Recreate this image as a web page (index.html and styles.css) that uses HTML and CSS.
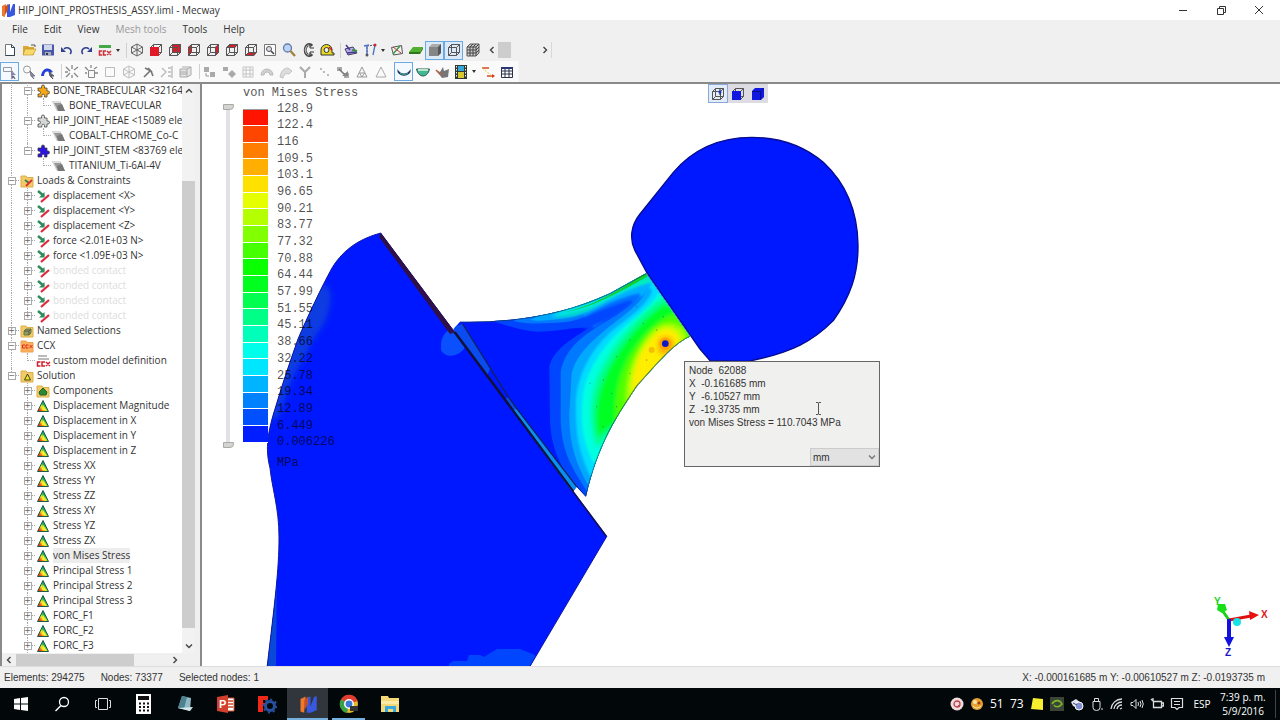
FILE: index.html
```html
<!DOCTYPE html>
<html lang="en">
<head>
<meta charset="utf-8">
<title>HIP_JOINT_PROSTHESIS_ASSY.liml - Mecway</title>
<link rel="stylesheet" href="styles.css">
</head>
<body>
<svg class="defs" aria-hidden="true">
  <defs>
    <g id="wire" fill="none" stroke="#555"><path d="M2.500 5.500h8v8h-8zM5.500 2.500h8v8M5.500 2.500v8h8M2.500 5.500l3-3M10.500 5.500l3-3M10.500 13.500l3-3M2.500 13.500l3-3"/></g>
    <linearGradient id="rain" x1="1" y1="0" x2="0" y2="1"><stop offset=".2" stop-color="#1560d8"/><stop offset=".4" stop-color="#18b050"/><stop offset=".6" stop-color="#f4ee20"/><stop offset=".85" stop-color="#f03018"/></linearGradient>
  </defs>
  <symbol id="i-result" viewBox="0 0 16 16"><path d="M8 2.500L13.500 13.500H2.500z" fill="url(#rain)" stroke="#1d5a48"/><path d="M8 7l3 5H7z" fill="#f8f030"/></symbol>
  <symbol id="i-load" viewBox="0 0 16 16"><path d="M3 3l6 5" stroke="#2f8a5c" stroke-width="2.500"/><path d="M9.500 4v5.500H4z" fill="#2f8a5c"/><path d="M6 14l8-7" stroke="#e0283c" stroke-width="2.200"/></symbol>
  <symbol id="i-mat" viewBox="0 0 16 16"><path d="M1 3h8l5 10H6z" fill="#999"/><path d="M1 3h8l1 2H3l4 8H6z" fill="#ddd"/><path d="M6 8l5-2 3 7H7z" fill="#777"/></symbol>
  <symbol id="i-puzzle" viewBox="0 0 16 16"><path d="M3 5h3.500V3.500a1.500 1.500 0 0 1 3 0V5H12v3h1a1.500 1.500 0 0 1 0 3h-1v3H9.500v-1.500a1.300 1.300 0 0 0-2.600 0V14H3v-3h1a1.500 1.500 0 0 0 0-3H3z" stroke="#333" stroke-opacity=".7"/></symbol>
  <symbol id="i-folder" viewBox="0 0 16 16"><path d="M2 3h5l1 1.500h6V14H2z" fill="#f2cb68" stroke="#dcae48"/></symbol>
  <symbol id="i-folder-load" viewBox="0 0 16 16"><use href="#i-folder"/><path d="M6 7l4 3" stroke="#38844c" stroke-width="2"/><path d="M7 13l6-6" stroke="#e03030" stroke-width="2"/></symbol>
  <symbol id="i-folder-sel" viewBox="0 0 16 16"><use href="#i-folder"/><path d="M5 8l2-2h5v4l-2 2H5z" fill="#8d9c58" stroke="#6d7840"/><path d="M5 8h5v4M10 8l2-2" stroke="#555" fill="none"/></symbol>
  <symbol id="i-folder-ccx" viewBox="0 0 16 16"><path d="M2 3h5l1 1.500h6V14H2z" fill="#fbae5c" stroke="#eda050"/><path d="M6 7H3.500v3H6M9.500 7H7v3h2.500M10.500 7l3 3M13.500 7l-3 3" stroke="#e02a18" fill="none"/></symbol>
  <symbol id="i-folder-sol" viewBox="0 0 16 16"><use href="#i-folder"/><path d="M8.500 6l3 6h-6z" fill="#f8e820" stroke="#404020"/></symbol>
  <symbol id="i-folder-comp" viewBox="0 0 16 16"><use href="#i-folder"/><path d="M8 5l4 4-1 3H5L4 9z" fill="#2a8a34" stroke="#206028"/></symbol>
  <symbol id="i-ccx" viewBox="0 0 16 16"><path d="M3 3h9M3 6h11" stroke="#777"/><path d="M5.500 9H2.500v4h3M10 9H7v4h3M11 9l4 4M15 9l-4 4" stroke="#d41c2c" stroke-width="1.500" fill="none"/></symbol>
  <symbol id="i-new" viewBox="0 0 16 16"><path d="M3.500 2.500h6l3 3v8h-9z" fill="#fff" stroke="#777"/><path d="M9.500 2.500v3h3v8h-9" fill="none" stroke="#345"/></symbol>
  <symbol id="i-open" viewBox="0 0 16 16"><path d="M2 4h5l1 1h5v8H2z" fill="#d8a830"/><path d="M4 7h11l-3 6H2z" fill="#f8d868" stroke="#b88a20" stroke-width=".6"/><path d="M10 3h4v2" stroke="#555" fill="none"/></symbol>
  <symbol id="i-save" viewBox="0 0 16 16"><path d="M2 2.500h12v11H2z" fill="#4858a8"/><path d="M4 3h8v5H4z" fill="#cfd6ee"/><path d="M5 10h6v4H5z" fill="#aab"/><path d="M6 11h2v2H6z" fill="#334"/></symbol>
  <symbol id="i-undo" viewBox="0 0 16 16"><path d="M5 7a4 3.500 0 1 1 6 5" fill="none" stroke="#304090" stroke-width="1.600"/><path d="M2 5v5h5z" fill="#304090"/></symbol>
  <symbol id="i-ccxrun" viewBox="0 0 16 16"><path d="M2 3h12v3H2z" fill="#45a848"/><path d="M5 9H2.500v4H5M9 9H6.500v4H9M10 9l4 4M14 9l-4 4" fill="none" stroke="#cc3038" stroke-width="1.600"/></symbol>
  <symbol id="i-iso" viewBox="0 0 16 16"><path d="M8 2l5.500 3v6L8 14l-5.500-3V5zM2.500 5L8 8l5.500-3M8 8v6M2.500 11L8 8l5.500 3M8 2v6" fill="none" stroke="#666"/></symbol>
  <symbol id="i-front" viewBox="0 0 16 16"><use href="#wire"/><path d="M2 5h9v9H2z" fill="#e01828"/></symbol>
  <symbol id="i-back" viewBox="0 0 16 16"><path d="M5 2h9v9H5z" fill="#d81c28"/><use href="#wire"/></symbol>
  <symbol id="i-left" viewBox="0 0 16 16"><path d="M2 5l4-3v8l-4 4z" fill="#d81c28"/><use href="#wire"/></symbol>
  <symbol id="i-right" viewBox="0 0 16 16"><path d="M10 5l4-3v8l-4 4z" fill="#d81c28"/><use href="#wire"/></symbol>
  <symbol id="i-top" viewBox="0 0 16 16"><path d="M2 6l4-4h8l-3 4z" fill="#d81c28"/><use href="#wire"/></symbol>
  <symbol id="i-bottom" viewBox="0 0 16 16"><path d="M2 14l4-4h8l-3 4z" fill="#d81c28"/><use href="#wire"/></symbol>
  <symbol id="i-fit" viewBox="0 0 16 16"><path d="M2.500 2.500h11v11h-11z" fill="#fafafa" stroke="#777"/><circle cx="7" cy="7" r="2.500" fill="#dde" stroke="#555"/><path d="M9 9l3 3" stroke="#444" stroke-width="1.600"/></symbol>
  <symbol id="i-zoom" viewBox="0 0 16 16"><circle cx="6.500" cy="6" r="4" fill="#b8d4f4" stroke="#6878a8" stroke-width="1.300"/><path d="M9.500 9l4.500 5" stroke="#a08038" stroke-width="2.200"/></symbol>
  <symbol id="i-rotate" viewBox="0 0 16 16"><path d="M12 4a4 5.500 0 1 0 0 8" fill="none" stroke="#444" stroke-width="3"/><path d="M11.500 4.500a3.600 5 0 1 0 0 7" fill="none" stroke="#ccc"/><path d="M10 2v4h4M10 14v-4h4" stroke="#333" fill="none"/></symbol>
  <symbol id="i-tape" viewBox="0 0 16 16"><path d="M2 13V8a5.500 5.500 0 0 1 11 0v3h2v2z" fill="#e8dc20" stroke="#333"/><circle cx="7.500" cy="8" r="2.500" fill="#eee" stroke="#333"/><path d="M10 5l3 3" stroke="#d02020" stroke-width="1.500"/></symbol>
  <symbol id="i-plane" viewBox="0 0 16 16"><path d="M2 7l8-2 4 6-9 2z" fill="#b8aee8" stroke="#40386a"/><path d="M3 3l4 5M4 11l9-1" stroke="#443c88" stroke-width="1.500"/><path d="M9 8l5 1" stroke="#389048" stroke-width="2"/></symbol>
  <symbol id="i-axes" viewBox="0 0 16 16"><path d="M5 13V4l8-1" fill="none" stroke="#556" stroke-dasharray="2 1"/><path d="M2 4l5-1M5 14V4M13 3l-2 10" stroke="#4a70c8" stroke-width="1.300"/><circle cx="5" cy="13" r="1.500" fill="#556"/><circle cx="13" cy="3" r="1.500" fill="#c03030"/></symbol>
  <symbol id="i-elem" viewBox="0 0 16 16"><path d="M2.500 5.500l10-2 1 8-9 1.500z" fill="#f4f4f4" stroke="#555"/><path d="M4 12l7-8" stroke="#3a9a48" stroke-width="1.500"/><path d="M4 5l8 6" stroke="#c03838"/></symbol>
  <symbol id="i-slab" viewBox="0 0 16 16"><path d="M5 5h10l-3 5H1z" fill="#52b030"/><path d="M1 10h11l3-5v2l-3 5H1z" fill="#2e7818"/></symbol>
  <symbol id="i-solid" viewBox="0 0 16 16"><path d="M2 5l3-3h9v9l-3 3H2z" fill="#aaa"/><path d="M2 5h9v9H2z" fill="#858585"/><path d="M11 5l3-3v9l-3 3z" fill="#555"/></symbol>
  <symbol id="i-wire" viewBox="0 0 16 16"><use href="#wire"/></symbol>
  <symbol id="i-mesh" viewBox="0 0 16 16"><path d="M2 5l3-3h9v9l-3 3H2z" fill="#ccc" stroke="#555"/><path d="M2 5h9v9M11 5l3-3M2 8h9l3-3M2 11h9l3-3M5 5v9M8 5v9M5 5l3-3M8 5l3-3" stroke="#444" fill="none"/></symbol>
  <symbol id="i-selrect" viewBox="0 0 16 16"><path d="M1.500 3.500h8v4h-8z" fill="none" stroke="#999"/><path d="M10 7v7l1.500-1.500L13 15" fill="none" stroke="#667" stroke-width="1.300"/><path d="M9 6l5 5h-5z" fill="#8a8aa8"/></symbol>
  <symbol id="i-selcirc" viewBox="0 0 16 16"><circle cx="6" cy="5.500" r="3.500" fill="none" stroke="#999"/><path d="M9 7l5 5h-3l2 3-3-3z" fill="#8a8aa8" stroke="#778"/></symbol>
  <symbol id="i-selface" viewBox="0 0 16 16"><path d="M1 12C2 4 9 2 13 8l-3 1C7 6 4 8 4 12z" fill="#2440d8"/><path d="M9 8l5 4h-3l2 3-3-3z" fill="#667" stroke="#556"/></symbol>
  <symbol id="i-star" viewBox="0 0 16 16"><path d="M2 3l4 4M14 3l-4 3M2 13l4-4M14 13l-4-4M8 1v4M1 8h3M8 11v3" stroke="#888" stroke-width="1.300"/></symbol>
  <symbol id="i-starsq" viewBox="0 0 16 16"><path d="M5.500 6.500h6v7h-6z" fill="none" stroke="#888"/><path d="M2 3l3 3M14 3l-3 2M8 1v3M2 9h2M12 9h3" stroke="#888" stroke-width="1.300"/></symbol>
  <symbol id="i-sq" viewBox="0 0 16 16"><path d="M3.500 3.500h9v9h-9z" fill="none" stroke="#bbb"/></symbol>
  <symbol id="i-cut" viewBox="0 0 16 16"><path d="M4 13l6-6M5 4l6 3 2 5M8 4l4 4" stroke="#777" stroke-width="1.700" fill="none"/></symbol>
  <symbol id="i-mirror" viewBox="0 0 16 16"><path d="M3 4l4 4-5 5M13 2v12M9 4h3M9 8h3M9 12h3" stroke="#bbb" fill="none" stroke-width="1.400"/></symbol>
  <symbol id="i-stack" viewBox="0 0 16 16"><path d="M2 5h7v8H2zM9 5l4-2v8l-4 2M4 3h9M2 8h7M2 10h7" stroke="#aaa" fill="#e4e4e4"/></symbol>
  <symbol id="i-copy" viewBox="0 0 16 16"><path d="M2 3h5v5H2zM8 8h5v5H8z" fill="#aaa"/><path d="M4 9v3h3" stroke="#999" fill="none"/></symbol>
  <symbol id="i-diamond" viewBox="0 0 16 16"><path d="M2 3h5v4H2zM11 6l4 4-4 4-4-4z" fill="#aaa"/></symbol>
  <symbol id="i-grid" viewBox="0 0 16 16"><path d="M3 3h10v10H3zM3 6h10M3 10h10M6 3v10M10 3v10" stroke="#c4c4c4" fill="none"/></symbol>
  <symbol id="i-arc" viewBox="0 0 16 16"><path d="M2 11a6 6 0 0 1 12 0h-3a3 3 0 0 0-6 0z" fill="#d0d0d0" stroke="#bbb"/></symbol>
  <symbol id="i-bend" viewBox="0 0 16 16"><path d="M2 13c1-6 4-9 8-9l4 3-3 3c-3-1-5 0-6 4z" fill="#ddd" stroke="#c4c4c4"/></symbol>
  <symbol id="i-y" viewBox="0 0 16 16"><path d="M3 3l5 5 5-5M8 8v6" stroke="#aaa" fill="none" stroke-width="2"/></symbol>
  <symbol id="i-dots" viewBox="0 0 16 16"><path d="M4 4h2v2H4zM7 7h2v2H7zM11 10h2v2h-2z" fill="#bbb"/></symbol>
  <symbol id="i-scale" viewBox="0 0 16 16"><path d="M2 3h5v4H2zM9 9h5v5H9z" fill="#aaa"/><path d="M4 5l7 7" stroke="#777" stroke-width="1.600"/><path d="M7 12h6V7z" fill="#888"/></symbol>
  <symbol id="i-tri" viewBox="0 0 16 16"><path d="M8 3l5 10H3z" fill="none" stroke="#aaa"/></symbol>
  <symbol id="i-tri2" viewBox="0 0 16 16"><path d="M8 3l5 10H3zM5.500 9h5L8 13z" fill="none" stroke="#999"/></symbol>
  <symbol id="i-deform" viewBox="0 0 16 16"><path d="M1.500 5c3 6 10 6 13 0v3c-3 5-10 5-13 0z" fill="#203868"/><path d="M4 9c3 2 6 2 8 0" stroke="#38b890" fill="none"/></symbol>
  <symbol id="i-cont" viewBox="0 0 16 16"><path d="M1.500 5h13c-1 5-4 7-6.500 7S2.500 10 1.500 5z" fill="#40b890" stroke="#305860"/><path d="M3 6h10" stroke="#b8e8c8" stroke-width="2"/></symbol>
  <symbol id="i-beam" viewBox="0 0 16 16"><path d="M2 6l4 2 3-5 1 4 5-2-1 8-6 1z" fill="#777"/><path d="M2 6l5 5" stroke="#c06040" stroke-width="1.500"/></symbol>
  <symbol id="i-film" viewBox="0 0 16 16"><path d="M2 1h12v14H2z" fill="#303830"/><path d="M5 2h6v5H5z" fill="#36a8d8"/><path d="M5 8h6v6H5z" fill="#d8c830"/><path d="M3.500 2v12M12.500 2v12" stroke="#eee" stroke-dasharray="1.500 1.500"/></symbol>
  <symbol id="i-range" viewBox="0 0 16 16"><path d="M2 4h7M7 12h7" stroke="#d84828" stroke-width="1.400"/><path d="M2 4l10 8" stroke="#e8c828" stroke-dasharray="2 1.500"/><path d="M12 10l3 2-3 2z" fill="#d83828"/></symbol>
  <symbol id="i-table" viewBox="0 0 16 16"><path d="M2.500 3.500h11v10h-11zM2.500 7h11M2.500 10h11M6 4v9M10 4v9" fill="#fff" stroke="#28304c"/><path d="M2 3h12v2H2z" fill="#283870"/></symbol>
  <symbol id="i-logo" viewBox="0 0 16 16"><path d="M2 14V4l4-2v5l3-5v9H7V8l-2 3v4z" fill="#f07828"/><path d="M7 3l3-1v8l3-8h2v11l-5 2H7z" fill="#3858e0"/><path d="M5 5l3-3v6l-3 5z" fill="#c05030"/></symbol>
</svg>

<header>
  <div class="titlebar">
    <svg class="ic"><use href="#i-logo"/></svg>
    <h1>HIP_JOINT_PROSTHESIS_ASSY.liml - Mecway</h1>
    <div class="winbtns">
      <button aria-label="Minimize"><svg viewBox="0 0 12 12"><path d="M2 6.500h8"/></svg></button>
      <button aria-label="Restore"><svg viewBox="0 0 12 12"><path d="M2.500 4.500h6v6h-6zM4.500 4V2.500h6v6H9"/></svg></button>
      <button aria-label="Close"><svg viewBox="0 0 12 12"><path d="M2 2l8 8M10 2l-8 8"/></svg></button>
    </div>
  </div>
  <nav class="menubar">
    <button>File</button><button>Edit</button><button>View</button><button disabled>Mesh tools</button><button>Tools</button><button>Help</button>
  </nav>
  <div class="toolbar">
    <button aria-label="New"><svg class="ic"><use href="#i-new"/></svg></button>
    <button aria-label="Open"><svg class="ic"><use href="#i-open"/></svg></button>
    <button aria-label="Save"><svg class="ic"><use href="#i-save"/></svg></button>
    <button aria-label="Undo"><svg class="ic"><use href="#i-undo"/></svg></button>
    <button aria-label="Redo"><svg class="ic flip"><use href="#i-undo"/></svg></button>
    <button aria-label="Solve"><svg class="ic"><use href="#i-ccxrun"/></svg></button>
    <button class="drop" aria-label="Solver options"></button>
    <span class="sep"></span>
    <button aria-label="Isometric"><svg class="ic"><use href="#i-iso"/></svg></button>
    <button aria-label="Front"><svg class="ic"><use href="#i-front"/></svg></button>
    <button aria-label="Back"><svg class="ic"><use href="#i-back"/></svg></button>
    <button aria-label="Left"><svg class="ic"><use href="#i-left"/></svg></button>
    <button aria-label="Right"><svg class="ic"><use href="#i-right"/></svg></button>
    <button aria-label="Top"><svg class="ic"><use href="#i-top"/></svg></button>
    <button aria-label="Bottom"><svg class="ic"><use href="#i-bottom"/></svg></button>
    <button aria-label="Fit"><svg class="ic"><use href="#i-fit"/></svg></button>
    <button aria-label="Zoom"><svg class="ic"><use href="#i-zoom"/></svg></button>
    <button aria-label="Rotate"><svg class="ic"><use href="#i-rotate"/></svg></button>
    <button aria-label="Measure"><svg class="ic"><use href="#i-tape"/></svg></button>
    <span class="sep"></span>
    <button aria-label="Cutting plane"><svg class="ic"><use href="#i-plane"/></svg></button>
    <button aria-label="Workplane"><svg class="ic"><use href="#i-axes"/></svg></button>
    <button class="drop" aria-label="Workplane options"></button>
    <button aria-label="Element axes"><svg class="ic"><use href="#i-elem"/></svg></button>
    <button aria-label="Shell thickness"><svg class="ic"><use href="#i-slab"/></svg></button>
    <button class="on" aria-label="Element surfaces"><svg class="ic"><use href="#i-solid"/></svg></button>
    <button class="on" aria-label="Element edges"><svg class="ic"><use href="#i-wire"/></svg></button>
    <button aria-label="Mesh lines"><svg class="ic"><use href="#i-mesh"/></svg></button>
    <div class="timescroll">
      <button aria-label="Previous step"><svg viewBox="0 0 8 8"><path d="M5.500 1L2.500 4l3 3"/></svg></button>
      <span class="thumb"></span>
      <button aria-label="Next step"><svg viewBox="0 0 8 8"><path d="M2.500 1l3 3-3 3"/></svg></button>
    </div>
  </div>
  <div class="toolbar second">
    <button class="on" aria-label="Select by rectangle"><svg class="ic"><use href="#i-selrect"/></svg></button>
    <button aria-label="Select by circle"><svg class="ic"><use href="#i-selcirc"/></svg></button>
    <button aria-label="Select faces"><svg class="ic"><use href="#i-selface"/></svg></button>
    <span class="sep"></span>
    <button aria-label="New node"><svg class="ic"><use href="#i-star"/></svg></button>
    <button aria-label="New element"><svg class="ic"><use href="#i-starsq"/></svg></button>
    <button aria-label="Quick square"><svg class="ic"><use href="#i-sq"/></svg></button>
    <button class="dim" aria-label="Quick cube"><svg class="ic"><use href="#i-iso"/></svg></button>
    <button aria-label="Delete"><svg class="ic"><use href="#i-cut"/></svg></button>
    <button aria-label="Mirror"><svg class="ic"><use href="#i-mirror"/></svg></button>
    <button aria-label="Extrude"><svg class="ic"><use href="#i-stack"/></svg></button>
    <span class="sep"></span>
    <button aria-label="Move"><svg class="ic"><use href="#i-copy"/></svg></button>
    <button aria-label="Rotate copy"><svg class="ic"><use href="#i-diamond"/></svg></button>
    <button aria-label="Refine"><svg class="ic"><use href="#i-grid"/></svg></button>
    <button aria-label="Revolve"><svg class="ic"><use href="#i-arc"/></svg></button>
    <button aria-label="Loft"><svg class="ic"><use href="#i-bend"/></svg></button>
    <button aria-label="Merge"><svg class="ic"><use href="#i-y"/></svg></button>
    <button aria-label="Node pattern"><svg class="ic"><use href="#i-dots"/></svg></button>
    <button aria-label="Scale"><svg class="ic"><use href="#i-scale"/></svg></button>
    <button aria-label="Subdivide"><svg class="ic"><use href="#i-tri2"/></svg></button>
    <button aria-label="Triangle"><svg class="ic"><use href="#i-tri"/></svg></button>
    <span class="sep plain"></span>
    <button class="on" aria-label="Undeformed"><svg class="ic"><use href="#i-deform"/></svg></button>
    <button aria-label="Deformed"><svg class="ic"><use href="#i-cont"/></svg></button>
    <button aria-label="Beam view"><svg class="ic"><use href="#i-beam"/></svg></button>
    <button aria-label="Animate"><svg class="ic"><use href="#i-film"/></svg></button>
    <button class="drop" aria-label="Animation options"></button>
    <button aria-label="Colour range"><svg class="ic"><use href="#i-range"/></svg></button>
    <button aria-label="Table"><svg class="ic"><use href="#i-table"/></svg></button>
  </div>
</header>

<main>
  <aside>
    <div class="treewrap">
      <ul class="tree">
        <li><i class="g v"></i><i class="g t"><button aria-label="Collapse">−</button></i><svg class="ic orange"><use href="#i-puzzle"/></svg><span>BONE_TRABECULAR &lt;32164</span></li>
        <li><i class="g v"></i><i class="g v"></i><i class="g e"></i><svg class="ic"><use href="#i-mat"/></svg><span>BONE_TRAVECULAR</span></li>
        <li><i class="g v"></i><i class="g t"><button aria-label="Collapse">−</button></i><svg class="ic grey"><use href="#i-puzzle"/></svg><span>HIP_JOINT_HEAE &lt;15089 eler</span></li>
        <li><i class="g v"></i><i class="g v"></i><i class="g e"></i><svg class="ic"><use href="#i-mat"/></svg><span>COBALT-CHROME_Co-C</span></li>
        <li><i class="g v"></i><i class="g e"><button aria-label="Collapse">−</button></i><svg class="ic blue"><use href="#i-puzzle"/></svg><span>HIP_JOINT_STEM &lt;83769 eler</span></li>
        <li><i class="g v"></i><i class="g"></i><i class="g e"></i><svg class="ic"><use href="#i-mat"/></svg><span>TITANIUM_Ti-6Al-4V</span></li>
        <li><i class="g t"><button aria-label="Collapse">−</button></i><svg class="ic"><use href="#i-folder-load"/></svg><span>Loads &amp; Constraints</span></li>
        <li><i class="g v"></i><i class="g t"><button aria-label="Expand">+</button></i><svg class="ic"><use href="#i-load"/></svg><span>displacement &lt;X&gt;</span></li>
        <li><i class="g v"></i><i class="g t"><button aria-label="Expand">+</button></i><svg class="ic"><use href="#i-load"/></svg><span>displacement &lt;Y&gt;</span></li>
        <li><i class="g v"></i><i class="g t"><button aria-label="Expand">+</button></i><svg class="ic"><use href="#i-load"/></svg><span>displacement &lt;Z&gt;</span></li>
        <li><i class="g v"></i><i class="g t"><button aria-label="Expand">+</button></i><svg class="ic"><use href="#i-load"/></svg><span>force &lt;2.01E+03 N&gt;</span></li>
        <li><i class="g v"></i><i class="g t"><button aria-label="Expand">+</button></i><svg class="ic"><use href="#i-load"/></svg><span>force &lt;1.09E+03 N&gt;</span></li>
        <li><i class="g v"></i><i class="g t"><button aria-label="Expand">+</button></i><svg class="ic"><use href="#i-load"/></svg><span class="faded">bonded contact</span></li>
        <li><i class="g v"></i><i class="g t"><button aria-label="Expand">+</button></i><svg class="ic"><use href="#i-load"/></svg><span class="faded">bonded contact</span></li>
        <li><i class="g v"></i><i class="g t"><button aria-label="Expand">+</button></i><svg class="ic"><use href="#i-load"/></svg><span class="faded">bonded contact</span></li>
        <li><i class="g v"></i><i class="g e"><button aria-label="Expand">+</button></i><svg class="ic"><use href="#i-load"/></svg><span class="faded">bonded contact</span></li>
        <li><i class="g t"><button aria-label="Expand">+</button></i><svg class="ic"><use href="#i-folder-sel"/></svg><span>Named Selections</span></li>
        <li><i class="g t"><button aria-label="Collapse">−</button></i><svg class="ic"><use href="#i-folder-ccx"/></svg><span>CCX</span></li>
        <li><i class="g v"></i><i class="g e"></i><svg class="ic"><use href="#i-ccx"/></svg><span>custom model definition</span></li>
        <li><i class="g e"><button aria-label="Collapse">−</button></i><svg class="ic"><use href="#i-folder-sol"/></svg><span>Solution</span></li>
        <li><i class="g"></i><i class="g t"><button aria-label="Expand">+</button></i><svg class="ic"><use href="#i-folder-comp"/></svg><span>Components</span></li>
        <li><i class="g"></i><i class="g t"><button aria-label="Expand">+</button></i><svg class="ic"><use href="#i-result"/></svg><span>Displacement Magnitude</span></li>
        <li><i class="g"></i><i class="g t"><button aria-label="Expand">+</button></i><svg class="ic"><use href="#i-result"/></svg><span>Displacement in X</span></li>
        <li><i class="g"></i><i class="g t"><button aria-label="Expand">+</button></i><svg class="ic"><use href="#i-result"/></svg><span>Displacement in Y</span></li>
        <li><i class="g"></i><i class="g t"><button aria-label="Expand">+</button></i><svg class="ic"><use href="#i-result"/></svg><span>Displacement in Z</span></li>
        <li><i class="g"></i><i class="g t"><button aria-label="Expand">+</button></i><svg class="ic"><use href="#i-result"/></svg><span>Stress XX</span></li>
        <li><i class="g"></i><i class="g t"><button aria-label="Expand">+</button></i><svg class="ic"><use href="#i-result"/></svg><span>Stress YY</span></li>
        <li><i class="g"></i><i class="g t"><button aria-label="Expand">+</button></i><svg class="ic"><use href="#i-result"/></svg><span>Stress ZZ</span></li>
        <li><i class="g"></i><i class="g t"><button aria-label="Expand">+</button></i><svg class="ic"><use href="#i-result"/></svg><span>Stress XY</span></li>
        <li><i class="g"></i><i class="g t"><button aria-label="Expand">+</button></i><svg class="ic"><use href="#i-result"/></svg><span>Stress YZ</span></li>
        <li><i class="g"></i><i class="g t"><button aria-label="Expand">+</button></i><svg class="ic"><use href="#i-result"/></svg><span>Stress ZX</span></li>
        <li><i class="g"></i><i class="g t"><button aria-label="Expand">+</button></i><svg class="ic"><use href="#i-result"/></svg><span class="sel">von Mises Stress</span></li>
        <li><i class="g"></i><i class="g t"><button aria-label="Expand">+</button></i><svg class="ic"><use href="#i-result"/></svg><span>Principal Stress 1</span></li>
        <li><i class="g"></i><i class="g t"><button aria-label="Expand">+</button></i><svg class="ic"><use href="#i-result"/></svg><span>Principal Stress 2</span></li>
        <li><i class="g"></i><i class="g t"><button aria-label="Expand">+</button></i><svg class="ic"><use href="#i-result"/></svg><span>Principal Stress 3</span></li>
        <li><i class="g"></i><i class="g t"><button aria-label="Expand">+</button></i><svg class="ic"><use href="#i-result"/></svg><span>FORC_F1</span></li>
        <li><i class="g"></i><i class="g t"><button aria-label="Expand">+</button></i><svg class="ic"><use href="#i-result"/></svg><span>FORC_F2</span></li>
        <li><i class="g"></i><i class="g t"><button aria-label="Expand">+</button></i><svg class="ic"><use href="#i-result"/></svg><span>FORC_F3</span></li>
      </ul>
      <div class="vscroll">
        <button aria-label="Scroll up"><svg viewBox="0 0 8 8"><path d="M1 5.500l3-3 3 3"/></svg></button>
        <span class="thumb"></span>
        <button aria-label="Scroll down"><svg viewBox="0 0 8 8"><path d="M1 2.500l3 3 3-3"/></svg></button>
      </div>
    </div>
    <div class="hscroll">
      <button aria-label="Scroll left"><svg viewBox="0 0 8 8"><path d="M5.500 1L2.500 4l3 3"/></svg></button>
      <span class="thumb"></span>
      <button aria-label="Scroll right"><svg viewBox="0 0 8 8"><path d="M2.500 1l3 3-3 3"/></svg></button>
    </div>
  </aside>

  <section class="view" aria-label="Model view">
    <svg class="model" aria-hidden="true">
      <defs>
        <clipPath id="bone-clip"><path d="M381 233C362 238 344 248 332 268C322 286 307 318 298 339C290 362 283 382 275 409C266 437 266 452 270 468C272 488 279 508 279 537C279 570 275 600 267 668L529 668L607 536z"/></clipPath>
        <clipPath id="stem-clip"><path d="M90 245C250 248 400 225 540 160L648 100L780 290C740 305 690 360 620 440C560 530 505 610 468 770L440 740L428 757L70 268z"/></clipPath>
        <filter id="soft" x="-20%" y="-20%" width="140%" height="140%"><feGaussianBlur stdDeviation="7"/></filter>
        <filter id="soft2" x="-20%" y="-20%" width="140%" height="140%"><feGaussianBlur stdDeviation="3"/></filter>
      </defs>
      <g transform="translate(-202 -84)">
        <g clip-path="url(#bone-clip)">
          <path d="M260 220h360v450H260z" fill="#0018ff"/>
          <path d="M322 284C332 284 334 300 325 322L310 345C306 358 296 368 290 385L278 418L262 420L300 300z" fill="#0a3ce0" filter="url(#soft2)"/>
          <path d="M277 560L276 668H262z" fill="#0a48d8"/>
          <path d="M449 664L453 661H467L469 655H480L484 657L497 649H520L535 655V668H449z" fill="#0046ff"/>
          <path d="M441 345C441 335 448 328 456 328L466 345C462 356 446 360 441 350z" fill="#0a50ff"/>
          <path d="M381 233L607 536" stroke="#18104c" stroke-width="3"/>
          <path d="M381 233L456 332L450 334L379 237z" fill="#301048"/>
        </g>
        <path d="M381 233C362 238 344 248 332 268C322 286 307 318 298 339C290 362 283 382 275 409C266 437 266 452 270 468C272 488 279 508 279 537C279 570 275 600 267 668M607 536L529 668" fill="none" stroke="#1018a0"/>
        <g transform="translate(430 240) scale(.3333)">
          <g clip-path="url(#stem-clip)">
            <path d="M60 80h730v700H60z" fill="#0018ff"/>
            <path d="M470 790C390 690 362 620 360 540L358 380C370 330 420 300 480 262C430 262 380 275 320 275C270 270 230 258 190 243L650 90L850 300z" fill="#0046ff"/>
            <path d="M475 760C430 690 395 640 392 540V400C400 340 440 300 500 262C560 225 600 200 625 170C560 190 480 238 400 247C350 250 300 255 250 243L650 80L850 300z" fill="#0078ff"/>
            <path d="M480 745C430 660 418 600 418 520L425 400C440 340 490 300 540 258C590 220 640 185 655 140C600 160 500 215 420 232C380 240 330 245 300 240L650 80L850 300z" fill="#00a8ff"/>
            <g filter="url(#soft2)">
              <path d="M482 710C440 630 436 560 438 480C446 390 490 320 555 265C610 222 650 195 665 155C670 130 600 150 560 175C500 200 440 222 360 232L650 70L850 300z" fill="#00dcff"/>
              <path d="M490 670C456 600 450 540 460 460C475 375 535 300 595 250C640 215 670 190 685 160L850 300z" fill="#00ffe0"/>
            </g>
            <g filter="url(#soft)">
              <path d="M500 620C475 550 478 470 508 400C548 315 610 240 700 170L850 300z" fill="#00ff90"/>
              <path d="M505 590C490 530 500 465 530 400C570 315 635 240 705 190L850 300z" fill="#00ff20"/>
              <path d="M560 560C550 460 570 390 610 330C650 270 710 220 735 225L850 320z" fill="#50ff00"/>
              <path d="M590 500C585 410 610 350 650 295C680 255 720 235 760 270L780 330z" fill="#b4ff00"/>
              <path d="M606 460C604 390 628 330 668 290C695 258 735 255 752 300L690 380z" fill="#ffee00"/>
              <path d="M682 310C682 280 733 280 733 312C733 345 700 348 685 338z" fill="#ffb400"/>
              <path d="M380 226C470 208 570 165 655 105L662 128C560 170 480 226 380 232z" fill="#00f0b0"/>
            </g>
            <g filter="url(#soft2)">
              <path d="M665 128C610 138 530 180 460 225L490 262C540 235 610 190 650 158z" fill="#00b0ff"/>
              <path d="M630 160C570 170 500 205 450 236L480 262C540 235 590 210 630 172z" fill="#0070ff"/>
              <path d="M605 180C550 195 490 220 430 245L470 268C520 245 570 220 605 188z" fill="#0046ff"/>
            </g>
            <path d="M400 217C480 200 560 160 648 96L652 110C560 162 480 205 400 217z" fill="#10d030"/>
            <circle cx="665" cy="330" r="9" fill="#e8900c" opacity=".5"/>
            <g fill="#203040" opacity=".45"><circle cx="520" cy="420" r="2"/><circle cx="545" cy="460" r="2"/><circle cx="500" cy="500" r="2"/><circle cx="560" cy="350" r="2"/><circle cx="600" cy="300" r="2"/><circle cx="640" cy="250" r="2"/><circle cx="520" cy="560" r="2"/><circle cx="600" cy="400" r="2"/><circle cx="650" cy="360" r="2"/><circle cx="700" cy="230" r="2"/><circle cx="480" cy="430" r="2"/><circle cx="560" cy="500" r="2"/><circle cx="620" cy="200" r="2"/><circle cx="680" cy="270" r="2"/></g>
            <path d="M60 262L98 252L180 385L172 408L160 400z" fill="#0a4cf0"/>
            <path d="M220 480L236 470L262 508L244 520z" fill="#0a4ce8"/>
            <path d="M240 510L262 508L442 740L424 758z" fill="#0a90f0"/>
            <path d="M98 252L236 472L262 508L440 740L470 774" stroke="#102060" stroke-width="4" fill="none"/>
            <path d="M90 245C250 248 400 225 540 160L648 100M780 290C740 305 690 360 620 440C560 530 505 610 468 770" stroke="#104030" stroke-width="5" fill="none" opacity=".7"/>
          </g>
          <path d="M75 276L430 754" stroke="#101038" stroke-width="6"/>
          <circle cx="706" cy="311" r="18" fill="#ff9800" opacity=".7"/>
          <circle cx="706" cy="311" r="10" fill="#1018c8"/>
        </g>
        <path transform="translate(620 84) scale(.3333)" d="M395 160C300 160 220 195 160 265L60 390C32 425 28 465 45 500L80 565L240 795L270 830L385 832C520 805 580 770 640 710C690 640 716 570 714 480C712 380 680 300 610 235C545 180 470 160 395 160z" fill="#0018ff" stroke="#080c90" stroke-width="4"/>
      </g>
    </svg>

    <div class="legend">
      <h2>von Mises Stress</h2>
      <div class="scale">
        <div class="limits">
          <input type="range" aria-label="Upper limit" min="0" max="100" value="0">
          <input type="range" aria-label="Lower limit" min="0" max="100" value="100">
        </div>
        <div class="bar">
          <i class="c1"></i><i class="c2"></i><i class="c3"></i><i class="c4"></i><i class="c5"></i><i class="c6"></i><i class="c7"></i><i class="c8"></i><i class="c9"></i><i class="c10"></i><i class="c11"></i><i class="c12"></i><i class="c13"></i><i class="c14"></i><i class="c15"></i><i class="c16"></i><i class="c17"></i><i class="c18"></i><i class="c19"></i><i class="c20"></i>
        </div>
        <ol class="ticks">
          <li>128.9</li><li>122.4</li><li>116</li><li>109.5</li><li>103.1</li><li>96.65</li><li>90.21</li><li>83.77</li><li>77.32</li><li>70.88</li><li>64.44</li><li>57.99</li><li>51.55</li><li>45.11</li><li>38.66</li><li>32.22</li><li>25.78</li><li>19.34</li><li>12.89</li><li>6.449</li><li>0.006226</li>
        </ol>
      </div>
      <p class="unit">MPa</p>
    </div>

    <div class="modes">
      <button class="on" aria-label="Select nodes"><svg class="ic"><use href="#wire"/><path d="M10 3v6" stroke="#223"/><circle cx="10" cy="6" r="1.500" fill="#2030c0"/></svg></button>
      <button aria-label="Select faces"><svg class="ic"><use href="#wire"/><path d="M2 5h9v9H2z" fill="#1018e0"/></svg></button>
      <button aria-label="Select elements"><svg class="ic"><path d="M2 5l3-3h9v9l-3 3H2z" fill="#1018e0"/><path d="M2.500 5.500h8v8M10.500 5.500l3-3" stroke="#080c80" fill="none"/></svg></button>
    </div>

    <div class="probe">
      <p>Node&nbsp; 62088</p>
      <p>X&nbsp; -0.161685 mm</p>
      <p>Y&nbsp; -6.10527 mm</p>
      <p>Z&nbsp; -19.3735 mm</p>
      <p>von Mises Stress = 110.7043 MPa</p>
      <div class="unitpick"><select aria-label="Length unit"><option>mm</option><option>m</option></select><svg viewBox="0 0 8 8"><path d="M1 2.500l3 3 3-3"/></svg></div>
      <svg class="caret" viewBox="0 0 7 13"><path d="M1 .5h2l.5.500.5-.5h2M3.500 1v11M1 12.500h2l.5-.5.5.500h2"/></svg>
    </div>

    <svg class="triad" viewBox="0 0 120 80" aria-hidden="true">
      <path d="M69 34L62 24" stroke="#18d018" stroke-width="3"/><path d="M57 24l1-6 7 0 2 6-5 3z" fill="#18e018"/>
      <path d="M69 34l22-4" stroke="#e01010" stroke-width="3"/><path d="M89 25l10 4-9 5z" fill="#e81010"/>
      <circle cx="77" cy="36" r="4" fill="#18e0e8"/>
      <path d="M69 33v19" stroke="#1010e0" stroke-width="4"/><path d="M64 51h10l-5 10z" fill="#1010e0"/>
      <text x="54" y="19" fill="#18d018">Y</text><text x="101" y="32" fill="#e01818">X</text><text x="65" y="70" fill="#1818c8">Z</text>
    </svg>
  </section>
</main>

<footer class="status">
  <span>Elements: 294275</span><span>Nodes: 73377</span><span>Selected nodes: 1</span>
  <span class="coords">X: -0.000161685 m Y: -0.00610527 m Z: -0.0193735 m</span>
</footer>

<div class="taskbar">
  <button aria-label="Start"><svg viewBox="0 0 20 20"><path d="M3 5l6-1v5.500H3zM10 4l7-1v6.500h-7zM3 10.500h6V16l-6-1zM10 10.500h7V17l-7-1z" fill="#fff"/></svg></button>
  <button aria-label="Search"><svg viewBox="0 0 20 20"><circle cx="12" cy="8" r="4.500" fill="none" stroke="#fff" stroke-width="1.300"/><path d="M9 11.500L3.500 17" stroke="#fff" stroke-width="1.500"/></svg></button>
  <button aria-label="Task view"><svg viewBox="0 0 20 20"><path d="M5.500 4.500h9v11h-9zM4 6.500H2.500v7H4M16 6.500h1.500v7H16" fill="none" stroke="#ddd"/></svg></button>
  <button aria-label="Calculator"><svg viewBox="0 0 20 20"><path d="M2 0h15v20H2z" fill="#fff"/><path d="M4 2h11v4H4z" fill="#111"/><path d="M5 9.500h10M5 13h10M5 16.500h10" stroke="#111" stroke-width="2" stroke-dasharray="2 2"/></svg></button>
  <button aria-label="Notes"><svg viewBox="0 0 20 20"><path d="M7 2l9 2-1 13-12-3z" fill="#8fb8c4"/><path d="M7 2l5 1-3 12-6-1z" fill="#4c8290"/><path d="M3 14l12 3 3-4z" fill="#d4e8ec"/></svg></button>
  <button aria-label="PowerPoint"><svg viewBox="0 0 20 20"><path d="M8 4h10v13H8z" fill="#fff" stroke="#d04828"/><path d="M12 7h5M12 10h5M12 13h5" stroke="#d04828" stroke-width="1.500"/><path d="M1 3l11-2v18L1 17z" fill="#d0402c"/><text x="3" y="14">P</text></svg></button>
  <button aria-label="FreeCAD"><svg viewBox="0 0 20 20"><path d="M1 2h10v4H6v3h4v3H6v6H1z" fill="#f02818"/><circle cx="13" cy="12" r="4.500" fill="none" stroke="#2850a0" stroke-width="3"/><circle cx="13" cy="12" r="6.500" fill="none" stroke="#2850a0" stroke-width="2" stroke-dasharray="2 3"/></svg></button>
  <button class="run cur" aria-label="Mecway"><svg viewBox="0 0 16 16"><use href="#i-logo"/></svg></button>
  <button class="run" aria-label="Chrome"><svg viewBox="0 0 20 20"><circle cx="10" cy="10" r="9" fill="#e8b828"/><path d="M10 10L2 5.500A9 9 0 0 1 18.500 7z" fill="#e03c30"/><path d="M10 10L2 5.500A9 9 0 0 0 8 19z" fill="#38a048"/><circle cx="10" cy="10" r="4.200" fill="#3c78d8" stroke="#fff" stroke-width="1.500"/><path d="M11 12h8v5h-8z" fill="#333"/></svg></button>
  <button aria-label="Explorer"><svg viewBox="0 0 20 20"><path d="M1 2h7l1 2h10v14H1z" fill="#f4d878"/><path d="M1 7h18v3H1z" fill="#fbe9a8"/><path d="M5 18v-6h11v6h-3v-3H8v3z" fill="#38a8e0"/></svg></button>

  <div class="tray">
    <svg viewBox="0 0 14 14"><circle cx="7" cy="7" r="6.500" fill="#f0dcdc"/><circle cx="7" cy="7" r="3" fill="none" stroke="#c04050" stroke-width="1.300"/><path d="M8 8l2 2" stroke="#c04050"/></svg>
    <svg viewBox="0 0 14 14"><circle cx="7" cy="7" r="6" fill="#e8a030"/><circle cx="5" cy="5" r="2" fill="#f8e8b0"/><circle cx="9" cy="6" r="1.500" fill="#a03818"/><path d="M3 9q4 4 8 0" stroke="#f8e8b0" fill="none"/></svg>
    <span>51</span><span>73</span>
    <svg viewBox="0 0 14 14"><path d="M3 1l10 1v11L1 12z" fill="#f8ee30"/></svg>
    <svg viewBox="0 0 14 14"><path d="M0 0h14v14H0z" fill="#3c4438"/><path d="M2 7c3-5 8-4 10 0-3 4-7 3-8 1" stroke="#78b828" stroke-width="1.600" fill="none"/></svg>
    <svg viewBox="0 0 14 14"><path d="M1 5l5-3 5 4-3 5-5-2z" fill="#e0e4f4"/><circle cx="9" cy="9" r="4" fill="#8090d0" stroke="#fff"/><path d="M3 6l4 2" stroke="#445"/></svg>
    <svg viewBox="0 0 14 14"><path d="M4.500 4.500V1.500h4v3M3 4.500h7v6q0 3-3.500 3T3 10.500zM11 12h2" stroke="#ddd" fill="none"/></svg>
    <svg viewBox="0 0 14 14"><path d="M1 12A11 11 0 0 1 12 2M4 12A8 8 0 0 1 12 5M7 12a5 5 0 0 1 5-4M10 12l2-1" stroke="#ddd" fill="none" stroke-width="1.300"/></svg>
    <svg viewBox="0 0 14 14"><path d="M1 5.500h2l3-3v9l-3-3H1zM8 5q1 2 0 4M10 4q2 3 0 6M12 3q2.500 4 0 8" stroke="#ddd" fill="none"/></svg>
    <svg viewBox="0 0 14 14"><path d="M3.500 4.500h8v6h-8zM12 6h1.500v3H12M1 2l3 3M3 1v3" stroke="#ddd" fill="none" stroke-width="1.300"/></svg>
    <svg viewBox="0 0 14 14"><path d="M1.500 1.500h11v9H9l-2 2-2-2H1.500zM4 4.500h6M4 7.500h6" stroke="#ddd" fill="none" stroke-width="1.200"/></svg>
    <span class="lang">ESP</span>
    <div class="clock"><time>7:39 p. m.</time><time>5/9/2016</time></div>
  </div>
</div>
</body>
</html>
```
FILE: styles.css
```css
* { box-sizing: border-box; }
html, body { height: 100%; }
body {
  margin: 0;
  display: flex;
  flex-direction: column;
  overflow: hidden;
  background: #f0f0f0;
  color: #333;
  font: 10px/15px "Open Sans", "Noto Sans", sans-serif;
}
h1, h2, p, ul, ol { margin: 0; padding: 0; font-weight: normal; list-style: none; }
button {
  display: flex;
  align-items: center;
  justify-content: center;
  margin: 0;
  padding: 0;
  border: 0;
  background: none;
  color: inherit;
  font: inherit;
}
.defs { position: absolute; width: 0; height: 0; }
.ic { width: 16px; height: 16px; flex: none; display: block; }
.flip { transform: scaleX(-1); }

/* Title and menu */
.titlebar { display: flex; align-items: center; height: 20px; background: #fff; }
.titlebar h1 { font-size: 10px; padding-left: 2px; }
.winbtns { display: flex; margin-left: auto; padding-right: 2px; }
.winbtns button { width: 38px; height: 20px; }
.winbtns svg { width: 12px; height: 12px; fill: none; stroke: #333; }
.menubar { display: flex; gap: 16px; height: 19px; padding-left: 12px; }
.menubar button:disabled { color: #999; }

/* Toolbars */
.toolbar { display: flex; align-items: center; height: 22px; }
.toolbar.second { height: 21px; background: linear-gradient(90deg, #fafafa 518px, #f0f0f0 519px); }
.toolbar > button { width: 19px; height: 19px; }
.toolbar .on { border: 1px solid #6aaae4; background: #dceaf8; }
.toolbar.second .on { background: #f4f9ff; }
.toolbar .dim { opacity: .4; }
.toolbar > .drop { width: 8px; }
.drop::before { content: ""; border: 2px solid transparent; border-top: 3px solid #333; border-bottom: 0; }
.sep { width: 5px; height: 15px; border-right: 1px solid #d0d0d0; }
.sep.plain { width: 4px; border: 0; }
.timescroll { display: flex; align-items: center; width: 70px; padding-left: 4px; border-right: 1px solid #d8d8d8; }
.timescroll button { width: 12px; height: 16px; }
.timescroll .thumb { width: 13px; height: 16px; background: #cdcdcd; }
.timescroll button:last-child { margin-left: auto; }
.timescroll svg, .hscroll svg, .vscroll svg, .unitpick svg {
  width: 8px; height: 8px; fill: none; stroke: #444; stroke-width: 1.400;
}

/* Model tree */
main { flex: 1; min-height: 0; display: flex; border-top: 2px solid #8a8a8a; }
aside { width: 202px; flex: none; display: flex; flex-direction: column; border-left: 2px solid #8a8a8a; border-right: 2px solid #8a8a8a; }
.treewrap { flex: 1; min-height: 0; display: flex; margin-right: 5px; background: #fff; }
.tree { flex: 1; min-width: 0; margin-top: -1px; padding-left: 1px; }
.tree li { display: flex; align-items: center; height: 15px; white-space: nowrap; }
.tree li > span { margin-left: 2px; line-height: 15px; }
.tree .sel { background: #ededed; }
.tree .faded { color: #ddd; }
.orange { fill: #f4a818; } .grey { fill: #d4d8d4; } .blue { fill: #2c14e0; }
.g { position: relative; width: 16px; height: 15px; flex: none; display: flex; align-items: center; justify-content: center; }
.g.v::before, .g.t::before, .g.e::before { content: ""; position: absolute; left: 8px; top: 0; height: 15px; border-left: 1px dotted #aaa; }
.g.e::before { height: 8px; }
.g.t::after, .g.e::after { content: ""; position: absolute; left: 8px; top: 7px; width: 8px; border-top: 1px dotted #aaa; }
.g button { position: relative; z-index: 1; width: 8px; height: 8px; margin-left: 1px; border: 1px solid #aaa; background: #fff; color: #666; font: 8px/6px "DejaVu Sans", sans-serif; }
.vscroll { width: 13px; display: flex; flex-direction: column; background: #f2f2f2; }
.vscroll button { height: 14px; }
.vscroll .thumb { flex: 1; margin: 83px 0 11px; background: #cdcdcd; }
.hscroll { display: flex; align-items: center; height: 13px; margin-right: 18px; }
.hscroll button { width: 14px; height: 13px; }
.hscroll .thumb { width: 118px; height: 12px; margin-right: auto; background: #cdcdcd; }

/* Model view */
.view { position: relative; flex: 1; min-width: 0; overflow: hidden; background: #fff; }
.model { position: absolute; inset: 0; width: 100%; height: 100%; }
.legend { position: relative; width: 160px; padding: 2px 0 0 20px; color: rgba(0, 0, 0, .7); font: 12px/14px "Liberation Mono", monospace; }
.legend h2 { padding-left: 21px; font-size: 12px; }
.scale { display: flex; align-items: center; height: 350px; padding-top: 1px; }
.limits { position: relative; width: 21px; height: 344px; }
.limits::before { content: ""; position: absolute; left: 4px; top: 3px; bottom: 3px; width: 4px; background: #e2e2e6; }
.limits input { position: absolute; left: 0; top: 0; width: 12px; height: 344px; margin: 0; appearance: none; background: none; writing-mode: vertical-lr; pointer-events: none; }
.limits input::-webkit-slider-thumb { appearance: none; width: 11px; height: 6px; border: 1px solid #aaa; border-radius: 0 0 4px 0; background: #d4d4d0; pointer-events: auto; }
.bar { width: 25px; height: 334px; display: flex; flex-direction: column; border-top: 1px solid #999; }
.bar i { flex: 1; border-bottom: 1px solid #fff; }
.c1 { background: #ff1400; } .c2 { background: #ff4600; } .c3 { background: #ff7d00; } .c4 { background: #ffaf00; } .c5 { background: #ffe100; }
.c6 { background: #e6ff00; } .c7 { background: #b4ff00; } .c8 { background: #82ff00; } .c9 { background: #46ff00; } .c10 { background: #0aff00; }
.c11 { background: #00ff1e; } .c12 { background: #00ff50; } .c13 { background: #00ff87; } .c14 { background: #00ffb9; } .c15 { background: #00ffeb; }
.c16 { background: #00e6ff; } .c17 { background: #00b4ff; } .c18 { background: #0082ff; } .c19 { background: #0050ff; } .c20 { background: #001eff; }
.ticks { display: flex; flex-direction: column; justify-content: space-between; height: 348px; padding-left: 9px; }
.unit { padding: 6px 0 0 55px; }
.modes { position: absolute; left: 506px; top: 0; display: flex; background: #dcdce2; }
.modes button { width: 20px; height: 19px; }
.modes .on { border: 1px solid #88a8dc; background: #e4ecf8; }
.probe { position: absolute; left: 482px; top: 277px; width: 196px; height: 106px; padding: 2px 4px; border: 1px solid #666; background: #f0f0ee; font: 10px/13px "Liberation Sans", sans-serif; }
.unitpick { position: absolute; right: 0; bottom: 0; width: 69px; height: 18px; background: #e2e2e2; }
.unitpick select { width: 100%; height: 100%; padding: 0 2px; border: 1px solid #ccc; appearance: none; background: none; color: #333; font: inherit; }
.unitpick svg { position: absolute; right: 3px; top: 5px; stroke: #777; }
.caret { position: absolute; left: 130px; top: 40px; width: 7px; height: 13px; fill: none; stroke: #555; }
.triad { position: absolute; right: 0; bottom: 0; width: 120px; height: 80px; font: bold 10px "Liberation Sans", sans-serif; }

/* Status and taskbar */
.status { display: flex; gap: 16px; height: 22px; padding: 0 15px 0 4px; border-top: 1px solid #ddd; font: 10px/22px "Liberation Sans", sans-serif; }
.coords { margin-left: auto; }
.taskbar { display: flex; height: 32px; background: #020809; color: #fff; }
.taskbar > button { width: 41px; height: 32px; }
.taskbar > button svg { width: 20px; height: 20px; font: bold 11px "Liberation Sans", sans-serif; fill: #fff; }
.taskbar .run { border-bottom: 2px solid #76b0e0; padding-top: 2px; }
.taskbar .run:not(.cur) { width: 33px; margin: 0 4px; }
.taskbar .cur { background: #30363c; }
.tray { display: flex; align-items: center; gap: 6px; margin-left: auto; padding-right: 4px; }
.tray > svg, .tray > span { width: 14px; height: 14px; line-height: 14px; font-size: 12px; }
.tray > .lang { width: 24px; text-align: center; font-size: 10px; }
.clock { display: flex; flex-direction: column; width: 56px; padding-right: 11px; border-right: 1px solid #444; text-align: right; line-height: 14px; white-space: nowrap; }
```
